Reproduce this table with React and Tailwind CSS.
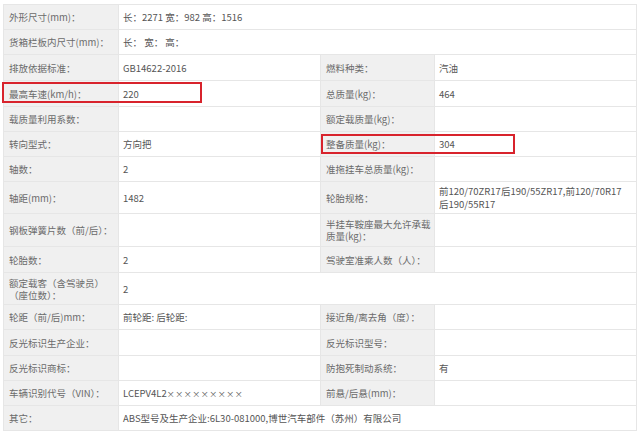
import React from "react";

const rows = [
  { h: 25, cells: [["外形尺寸(mm)："], ["长：2271 宽：982 高：1516", 3]] },
  { h: 25, cells: [["货箱栏板内尺寸(mm)："], ["长：  宽：  高：", 3]] },
  { h: 26, cells: [["排放依据标准："], ["GB14622-2016"], ["燃料种类："], ["汽油"]] },
  { h: 26, cells: [["最高车速(km/h)："], ["220"], ["总质量(kg)："], ["464"]] },
  { h: 25, cells: [["载质量利用系数："], [""], ["额定载质量(kg)："], [""]] },
  { h: 25, cells: [["转向型式："], ["方向把"], ["整备质量(kg)："], ["304"]] },
  { h: 25, cells: [["轴数："], ["2"], ["准拖挂车总质量(kg)："], [""]] },
  {
    h: 32,
    cells: [
      ["轴距(mm)："],
      ["1482"],
      ["轮胎规格："],
      [
        <span className="block leading-[13px] whitespace-nowrap">
          前120/70ZR17后190/55ZR17,前120/70R17
          <br />
          后190/55R17
        </span>,
      ],
    ],
  },
  { h: 33, cells: [["钢板弹簧片数（前/后）："], [""], ["半挂车鞍座最大允许承载质量(kg)："], [""]] },
  { h: 26, cells: [["轮胎数："], ["2"], ["驾驶室准乘人数（人）："], [""]] },
  { h: 32, cells: [["额定载客（含驾驶员）（座位数）："], ["2", 3]] },
  { h: 25, cells: [["轮距（前/后)mm："], ["前轮距: 后轮距:"], ["接近角/离去角（度）："], [""]] },
  { h: 26, cells: [["反光标识生产企业："], [""], ["反光标识型号："], [""]] },
  { h: 25, cells: [["反光标识商标："], [""], ["防抱死制动系统："], ["有"]] },
  {
    h: 25,
    cells: [
      ["车辆识别代号（VIN）："],
      [
        <>
          LCEPV4L2
          <span className="text-[8px] tracking-[0.5px]">×××××××××</span>
        </>,
      ],
      ["前悬/后悬(mm)："],
      [""],
    ],
  },
  { h: 25, cells: [["其它："], ["ABS型号及生产企业:6L30-081000,博世汽车部件（苏州）有限公司", 3]] },
];

export default function App() {
  return (
    <div
      className="relative w-[641px] h-[435px] bg-white overflow-hidden"
      style={{ fontFamily: '"Noto Sans CJK SC", "Noto Sans", sans-serif' }}
    >
      <div className="pt-[4px] pl-[3px]">
        <table className="table-fixed border-collapse w-[633px] text-[9.5px] leading-[12px]">
          <colgroup>
            <col className="w-[115px]" />
            <col className="w-[202px]" />
            <col className="w-[114px]" />
            <col className="w-[202px]" />
          </colgroup>
          <tbody>
            {rows.map((r, i) => (
              <tr key={i} style={{ height: r.h }}>
                {r.cells.map((c, j) => {
                  const isLabel = j % 2 === 0;
                  return (
                    <td
                      key={j}
                      colSpan={c[1] || 1}
                      className={
                        isLabel
                          ? "border border-[#e6e6e6] bg-[#f0f0f0] text-[#6b6b6b] pl-[5px] pr-[3px] align-middle"
                          : "border border-[#e6e6e6] bg-white text-[#555555] pl-[4px] pr-[3px] align-middle"
                      }
                    >
                      {c[0]}
                    </td>
                  );
                })}
              </tr>
            ))}
          </tbody>
        </table>
      </div>
      <div className="absolute left-[2px] top-[82px] w-[200px] h-[21px] border-2 border-[#d8232c]" />
      <div className="absolute left-[321px] top-[134px] w-[194px] h-[20px] border-2 border-[#d8232c]" />
    </div>
  );
}
